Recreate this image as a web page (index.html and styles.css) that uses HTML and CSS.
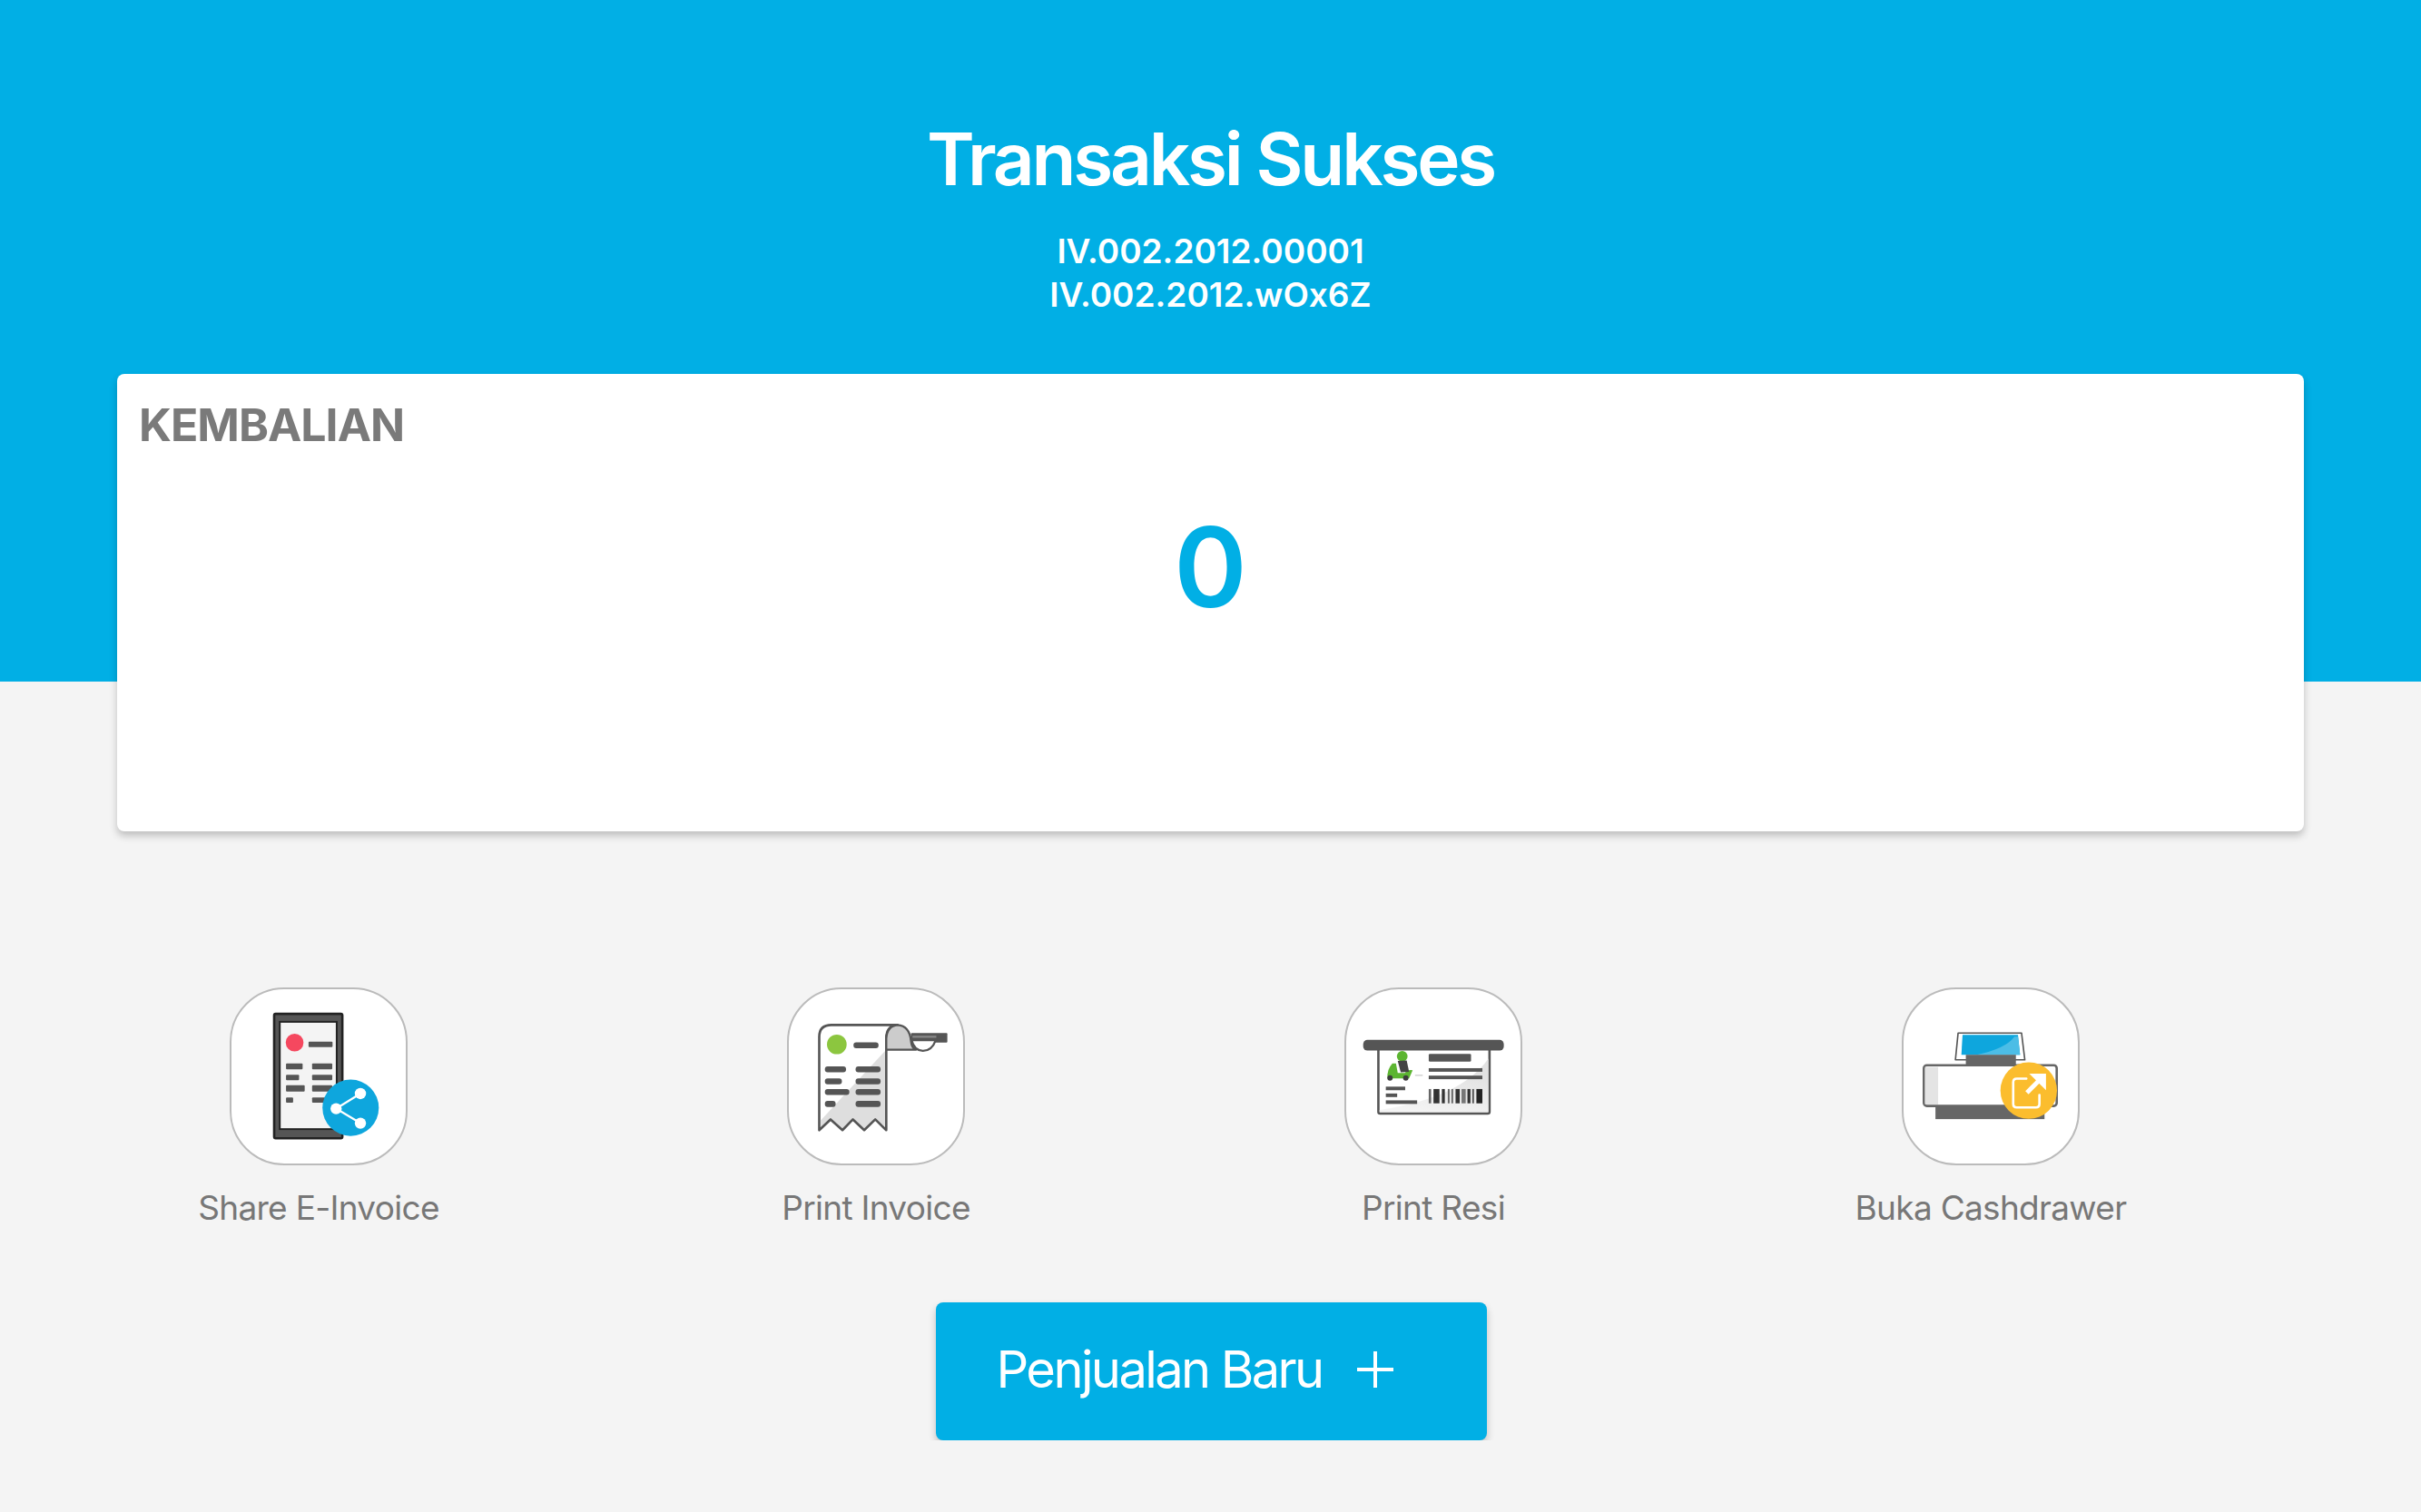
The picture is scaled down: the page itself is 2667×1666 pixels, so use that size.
FILE: index.html
```html
<!DOCTYPE html>
<html lang="en">
<head>
  <meta charset="UTF-8" />
  <title>Transaksi Sukses</title>
  <link rel="stylesheet" href="styles.css">
</head>
<body>

  <header class="hero">
    <h1>Transaksi Sukses</h1>
    <div class="invoice-no">IV.002.2012.00001<br>IV.002.2012.wOx6Z</div>
    <section class="change-card">
      <h2>KEMBALIAN</h2>
      <div class="change-value">0</div>
    </section>
  </header>

  <main>
    <div class="actions">

      <div class="action">
        <div class="action-icon">
          <svg viewBox="100 85 588 588">
            <rect x="244" y="168" width="230" height="420" rx="5" fill="#555" stroke="#222" stroke-width="8"/>
            <rect x="263" y="195" width="192" height="362" fill="#f4f4f4" stroke="#222" stroke-width="6"/>
            <circle cx="313" cy="265" r="30" fill="#f5485f"/>
            <g fill="#555">
              <rect x="360" y="262" width="81" height="18" rx="3"/>
              <rect x="284" y="335" width="56" height="20" rx="3"/>
              <rect x="372" y="335" width="68" height="20" rx="3"/>
              <rect x="284" y="374" width="44" height="18" rx="3"/>
              <rect x="372" y="374" width="68" height="18" rx="3"/>
              <rect x="284" y="409" width="63" height="21" rx="3"/>
              <rect x="372" y="409" width="68" height="21" rx="3"/>
              <rect x="284" y="450" width="24" height="18" rx="3"/>
              <rect x="372" y="450" width="50" height="18" rx="3"/>
            </g>
            <circle cx="502" cy="485" r="95" fill="#0ea6dd"/>
            <path d="M535 437L453 488L535 537" fill="none" stroke="#fff" stroke-width="7"/>
            <circle cx="535" cy="437" r="19" fill="#fff"/>
            <circle cx="453" cy="488" r="19" fill="#fff"/>
            <circle cx="535" cy="537" r="19" fill="#fff"/>
          </svg>
        </div>
        <span>Share E-Invoice</span>
      </div>

      <div class="action">
        <div class="action-icon">
          <svg viewBox="85 85 585 585">
            <path d="M408 292V545L375 522L338 555L300 522L265 555L225 522L192 552V525Z" fill="#dedede"/>
            <path d="M187 558V245Q187 205 228 205H450Q412 208 412 250V558L375 522L338 558L300 522L265 558L225 522Z" fill="none" stroke="#555" stroke-width="8" stroke-linejoin="round"/>
            <path d="M412 288V250Q415 208 450 205Q490 208 495 258Q497 283 512 288Z" fill="#ccc" stroke="#555" stroke-width="7" stroke-linejoin="round"/>
            <rect x="495" y="232" width="122" height="32" rx="3" fill="#555"/>
            <rect x="500" y="241" width="80" height="7" fill="#888"/>
            <path d="M497 256H578Q565 292 535 292Q505 290 497 256Z" fill="#fff" stroke="#555" stroke-width="7"/>
            <circle cx="246" cy="270" r="33" fill="#8cc63f"/>
            <g fill="#555">
              <rect x="302" y="263" width="84" height="20" rx="9"/>
              <rect x="206" y="344" width="71" height="20" rx="9"/>
              <rect x="309" y="344" width="84" height="20" rx="9"/>
              <rect x="206" y="384" width="57" height="20" rx="9"/>
              <rect x="309" y="384" width="84" height="20" rx="9"/>
              <rect x="206" y="420" width="82" height="20" rx="9"/>
              <rect x="309" y="420" width="84" height="20" rx="9"/>
              <rect x="206" y="460" width="36" height="20" rx="9"/>
              <rect x="309" y="460" width="84" height="20" rx="9"/>
            </g>
          </svg>
        </div>
        <span>Print Invoice</span>
      </div>

      <div class="action">
        <div class="action-icon">
          <svg viewBox="95 85 585 585">
            <defs>
              <linearGradient id="paperShade" x1="0.35" y1="1" x2="0.75" y2="0.2">
                <stop offset="0" stop-color="#f4f4f4"/>
                <stop offset="1" stop-color="#e2e2e2"/>
              </linearGradient>
            </defs>
            <rect x="203" y="272" width="373" height="230" rx="6" fill="#fff" stroke="#555" stroke-width="8"/>
            <path d="M572 318V498H207V490Q480 450 572 318Z" fill="url(#paperShade)"/>
            <rect x="152" y="255" width="472" height="36" rx="14" fill="#555"/>
            <g fill="#555">
              <rect x="372" y="302" width="142" height="26" rx="4"/>
              <rect x="372" y="350" width="180" height="12"/>
              <rect x="372" y="375" width="180" height="12"/>
              <rect x="228" y="412" width="65" height="12"/>
              <rect x="228" y="435" width="38" height="12"/>
              <rect x="228" y="458" width="105" height="12"/>
            </g>
            <g fill="#333">
              <rect x="372" y="420" width="8" height="48" fill="#666"/>
              <rect x="388" y="420" width="20" height="48"/>
              <rect x="416" y="420" width="10" height="48"/>
              <rect x="436" y="420" width="6" height="48" fill="#666"/>
              <rect x="448" y="420" width="6" height="48" fill="#666"/>
              <rect x="462" y="420" width="14" height="48"/>
              <rect x="482" y="420" width="14" height="48" fill="#777"/>
              <rect x="502" y="420" width="10" height="48"/>
              <rect x="518" y="420" width="6" height="48" fill="#555"/>
              <rect x="532" y="420" width="20" height="48" fill="#222"/>
            </g>
            <path d="M234 384Q230 356 250 334L262 334L268 366H292Q300 354 318 357L306 384Z" fill="#5cb531"/>
            <circle cx="283" cy="310" r="18" fill="#5cb531"/>
            <path d="M268 326L298 324L306 362L278 364Z" fill="#444"/>
            <circle cx="242" cy="383" r="9" fill="#3c3c3c"/>
            <circle cx="295" cy="383" r="9" fill="#3c3c3c"/>
            <rect x="326" y="372" width="26" height="4" fill="#ccc"/>
          </svg>
        </div>
        <span>Print Resi</span>
      </div>

      <div class="action">
        <div class="action-icon">
          <svg viewBox="108 85 585 585">
            <path d="M291 232H504L515 322H282Z" fill="#fff" stroke="#555" stroke-width="5" stroke-linejoin="round"/>
            <path d="M306 238H492L499 305H302Z" fill="#0ea6dd"/>
            <path d="M352 305Q450 285 480 244H492L499 305Z" fill="#4cbde6"/>
            <rect x="317" y="305" width="168" height="36" fill="#666"/>
            <rect x="215" y="470" width="366" height="51" fill="#666"/>
            <rect x="176" y="340" width="446" height="137" rx="10" fill="#fff" stroke="#666" stroke-width="8"/>
            <rect x="180" y="346" width="44" height="126" fill="#e4e4e4"/>
            <circle cx="528" cy="425" r="95" fill="#fbbd2e"/>
            <path d="M520 385H488Q476 385 476 397V470Q476 482 488 482H552Q564 482 564 470V440" fill="none" stroke="#fff" stroke-width="8" stroke-linecap="round"/>
            <path d="M522 432L562 392" stroke="#fff" stroke-width="15"/>
            <path d="M530 368H586V424Z" fill="#fff"/>
          </svg>
        </div>
        <span>Buka Cashdrawer</span>
      </div>

    </div>

    <button type="button" class="new-sale">
      Penjualan Baru
      <svg viewBox="0 0 40 40"><path d="M0 20H40M20 0V40" stroke="#fff" stroke-width="4"/></svg>
    </button>
  </main>

</body>
</html>
```

FILE: styles.css
```css
* { box-sizing: border-box; }
body {
  font-family: 'Inter', sans-serif;
  margin: 0;
  background: #f4f4f4;
  color: #777;
}
.hero {
  background: #01afe5;
  color: white;
  height: 751px;
  padding-top: 126px;
  text-align: center;
}
h1 {
  margin: 0;
  font-size: 80px;
  line-height: 97px;
  font-weight: 600;
  letter-spacing: -3.2px;
}
.invoice-no {
  margin-top: 30px;
  font-size: 37px;
  line-height: 48px;
  font-weight: 600;
}
.change-card {
  background: white;
  width: 2409px;
  height: 504px;
  margin: 63px 0 0 129px;
  border-radius: 8px;
  box-shadow: 0 5px 9px rgba(0,0,0,0.22);
  padding: 26px 24px;
}
.change-card h2 {
  margin: 0;
  color: #7a7a7a;
  font-size: 50px;
  line-height: 60px;
  font-weight: 700;
  text-align: left;
  letter-spacing: -1px;
}
.change-value {
  margin-top: 57px;
  color: #01afe5;
  font-size: 122px;
  line-height: 140px;
  font-weight: 600;
  text-align: center;
}
main {
  display: flex;
  flex-direction: column;
  align-items: center;
}
.actions {
  align-self: flex-start;
  display: grid;
  grid-template-columns: repeat(4, 614px);
  padding: 337px 0 0 44px;
}
.action {
  display: flex;
  flex-direction: column;
  align-items: center;
  font-size: 37px;
  letter-spacing: -0.7px;
  line-height: 48px;
  color: #777;
}
.action span { margin-top: 23px; }
.action-icon {
  width: 196px;
  height: 196px;
  background: white;
  border: 2px solid #bbb;
  border-radius: 60px;
}
.action-icon svg {
  display: block;
  width: 100%;
  height: 100%;
}
.new-sale {
  display: flex;
  align-items: center;
  gap: 38px;
  width: 607px;
  height: 152px;
  margin: 80px 0 0 1px;
  padding: 0 0 4px 67px;
  background: #01afe5;
  color: white;
  border: none;
  border-radius: 8px;
  box-shadow: 0 5px 9px rgba(0,0,0,0.22);
  font-family: inherit;
  font-size: 56px;
  letter-spacing: -2.6px;
}
.new-sale svg {
  width: 40px;
  height: 40px;
}
```
